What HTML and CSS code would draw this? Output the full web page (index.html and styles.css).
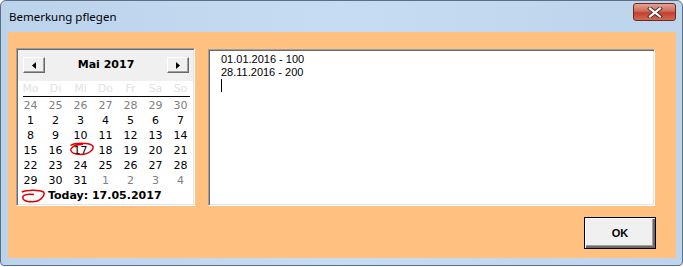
FILE: index.html
```html
<!DOCTYPE html>
<html lang="de">
<head>
  <meta charset="UTF-8" />
  <title>Bemerkung pflegen</title>
  <link rel="stylesheet" href="styles.css">
</head>
<body>
  <div class="window">
    <div class="titlebar">
      <span class="title">Bemerkung pflegen</span>
      <div class="close">
        <svg width="16" height="11" viewBox="0 0 16 11">
          <path d="M3 1.5 L13 9.5 M13 1.5 L3 9.5" stroke="#4a2a2a" stroke-width="4" stroke-linecap="square"/>
          <path d="M3 1.5 L13 9.5 M13 1.5 L3 9.5" stroke="#fff" stroke-width="2.2" stroke-linecap="square"/>
        </svg>
      </div>
    </div>

    <div class="client">
      <div class="main">
        <div class="calendar">
          <div class="cal-head">
            <div class="nav">
              <svg width="4" height="7" viewBox="0 0 4 7"><polygon points="4,0 4,7 0,3.5" fill="#000"/></svg>
            </div>
            <span class="month">Mai 2017</span>
            <div class="nav">
              <svg width="4" height="7" viewBox="0 0 4 7"><polygon points="0,0 0,7 4,3.5" fill="#000"/></svg>
            </div>
          </div>

          <div class="weekdays">
            <span>Mo</span><span>Di</span><span>Mi</span><span>Do</span><span>Fr</span><span>Sa</span><span>So</span>
          </div>
          <div class="rule"></div>

          <div class="days">
            <span class="other">24</span><span class="other">25</span><span class="other">26</span><span class="other">27</span><span class="other">28</span><span class="other">29</span><span class="other">30</span>
            <span>1</span><span>2</span><span>3</span><span>4</span><span>5</span><span>6</span><span>7</span>
            <span>8</span><span>9</span><span>10</span><span>11</span><span>12</span><span>13</span><span>14</span>
            <span>15</span><span>16</span>
            <span class="selected">17
              <svg class="mark" width="26" height="14" viewBox="0 0 26 14">
                <path d="M1.5 3.5 C6 0.5, 19 0.5, 23.5 3.5 C26 7, 20 12.5, 12 12.5 C4.5 12.5, 1 10, 2 7 C3 4.5, 8 2.5, 14 2.2" fill="none" stroke="#e30000" stroke-width="1.4"/>
              </svg>
            </span>
            <span>18</span><span>19</span><span>20</span><span>21</span>
            <span>22</span><span>23</span><span>24</span><span>25</span><span>26</span><span>27</span><span>28</span>
            <span>29</span><span>30</span><span>31</span><span class="other">1</span><span class="other">2</span><span class="other">3</span><span class="other">4</span>
          </div>

          <div class="today">
            <svg class="today-mark" width="25" height="14" viewBox="0 0 25 14">
              <path d="M0.8 3 C6 0.8, 18 0.5, 22.5 3 C25 7, 18.5 12.8, 11.5 12.8 C4 12.8, 1 10.5, 2 7.5 C3.5 5, 8.5 5, 13 5.5" fill="none" stroke="#e30000" stroke-width="1.5"/>
            </svg>
            <span>Today: 17.05.2017</span>
          </div>
        </div>

        <div class="memo">
          <div class="line">01.01.2016 - 100</div>
          <div class="line">28.11.2016 - 200</div>
          <div class="line"><span class="caret"></span></div>
        </div>
      </div>

      <div class="footer">
        <button class="ok">OK</button>
      </div>
    </div>
  </div>
</body>
</html>
```

FILE: styles.css
```css
body {
  margin: 0;
  background: #ffffff;
  width: 683px;
  height: 267px;
  overflow: hidden;
}

.window {
  width: 683px;
  height: 266px;
  box-sizing: border-box;
  border: 1px solid #5f6f82;
  border-radius: 6px 6px 4px 4px;
  background: linear-gradient(to right, #bcd3ec, #c6dcf2 50%, #bcd4ec);
  padding: 0 6px 7px 7px;
  display: flex;
  flex-direction: column;
}

.titlebar {
  height: 31px;
  display: flex;
  align-items: flex-start;
  justify-content: space-between;
}

.title {
  font-family: "Noto Sans", sans-serif;
  font-size: 11.5px;
  color: #000;
  margin-top: 8px;
  margin-left: 1px;
}

.close {
  width: 43px;
  height: 18px;
  margin-top: 2px;
  box-sizing: border-box;
  border: 1px solid #6e2a22;
  border-radius: 3px;
  background: linear-gradient(to bottom, #e3a393 0%, #cf6a58 45%, #c2402c 55%, #d26a55 100%);
  display: flex;
  align-items: center;
  justify-content: center;
}

.client {
  flex: 1;
  background: #ffc080;
  padding: 16px 21px 0 8px;
  display: flex;
  flex-direction: column;
}

.main {
  display: flex;
  gap: 13px;
}

.calendar {
  width: 179px;
  height: 158px;
  box-sizing: border-box;
  border: 1px solid;
  border-color: #a0a0a0 #ffffff #ffffff #a0a0a0;
  box-shadow: inset 1px 1px 0 #696969, inset -1px -1px 0 #e3e3e3;
  padding: 1px;
  background: #ffffff;
  font-family: "DejaVu Sans", sans-serif;
  font-size: 11px;
  color: #000;
}

.cal-head {
  height: 31px;
  box-sizing: border-box;
  background: #f0f0f0;
  padding: 7px 4px 0 5px;
  display: flex;
  align-items: flex-start;
}

.nav {
  width: 22px;
  height: 16px;
  box-sizing: border-box;
  background: #f0f0f0;
  border: 1px solid;
  border-color: #ffffff #696969 #696969 #ffffff;
  box-shadow: inset -1px -1px 0 #a0a0a0;
  display: flex;
  align-items: center;
  justify-content: center;
}

.month {
  flex: 1;
  text-align: center;
  font-weight: bold;
  line-height: 16px;
}

.weekdays,
.days {
  display: grid;
  grid-template-columns: repeat(7, 25px);
}

.weekdays span,
.days span {
  height: 15px;
  line-height: 15px;
  text-align: center;
}

.weekdays span {
  color: #e2e2e2;
}

.rule {
  height: 1px;
  background: #000;
  margin: 0 3px 1px 5px;
}

.days .other {
  color: #808080;
}

.days .selected {
  position: relative;
}

.mark {
  position: absolute;
  left: 1px;
  top: -1px;
}

.today {
  height: 15px;
  display: flex;
  align-items: center;
  gap: 2px;
  padding-left: 3px;
  font-weight: bold;
}

.today-mark {
  flex-shrink: 0;
}

.memo {
  width: 447px;
  height: 157px;
  margin-top: 1px;
  box-sizing: border-box;
  border: 1px solid;
  border-color: #a0a0a0 #ffffff #ffffff #a0a0a0;
  box-shadow: inset 1px 1px 0 #696969, inset -1px -1px 0 #e3e3e3;
  background: #ffffff;
  padding: 3px 12px;
  font-family: "Liberation Sans", Arial, sans-serif;
  font-size: 11px;
  line-height: 13px;
  color: #000;
}

.line {
  height: 13px;
}

.caret {
  display: inline-block;
  width: 1px;
  height: 13px;
  background: #000;
  vertical-align: top;
}

.footer {
  display: flex;
  justify-content: flex-end;
  margin-top: 11px;
}

.ok {
  width: 72px;
  height: 32px;
  margin-right: -1px;
  box-sizing: border-box;
  border: 1px solid #000;
  box-shadow: inset 1px 1px 0 #ffffff, inset -2px -2px 0 #696969, inset -3px -3px 0 #a0a0a0;
  background: #f0f0f0;
  font-family: "Liberation Sans", Arial, sans-serif;
  font-weight: bold;
  font-size: 11px;
  color: #000;
  padding: 0;
}
```
